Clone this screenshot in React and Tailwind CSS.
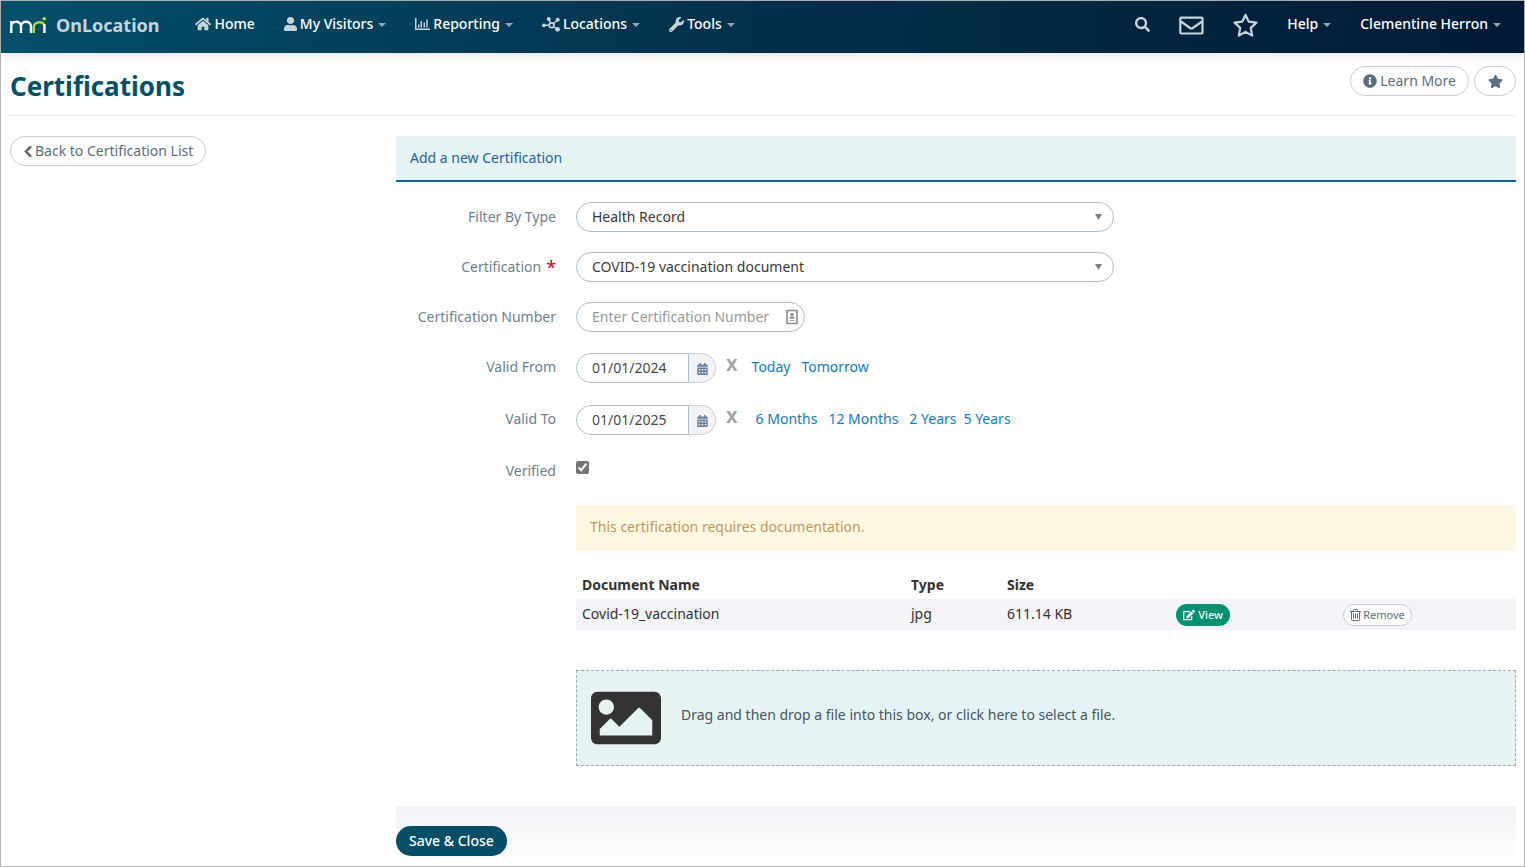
import React from "react";
import {
  FaHome,
  FaUser,
  FaWrench,
  FaSearch,
  FaStar,
  FaInfoCircle,
  FaChevronLeft,
  FaCalendarAlt,
  FaEdit,
  FaImage,
} from "react-icons/fa";

function Logo() {
  return (
    <svg viewBox="0 0 36 17" className="h-[17px] w-9" fill="none" strokeWidth="2.4">
      <path d="M1.3 16V4M1.3 9.500C1.300 3.200 11 3.200 11 9.500V16M11 9.500C11 3.200 21 3.200 21 9.500V16" stroke="#fff" />
      <path d="M23.800 16V10C23.800 5.500 32 3 34.200 8" stroke="#b5d334" />
      <path d="M34.400 7V16" stroke="#fff" />
      <circle cx="34.200" cy="1.800" r="1.800" fill="#c3dc2f" />
    </svg>
  );
}

function BarChartIcon() {
  return (
    <svg viewBox="0 0 15 12" className="h-3 w-[15px]" fill="currentColor">
      <path d="M0 0H1.500V10.500H15V12H0ZM3 6.500H4.500V9.500H3ZM5.500 3H7V9.500H5.500ZM8.500 4.500H10V9.500H8.500ZM11.200 1.500H12.700V9.500H11.200Z" />
    </svg>
  );
}

function NetworkIcon() {
  return (
    <svg viewBox="0 0 18 15" className="h-[15px] w-[18px]" fill="currentColor">
      <path
        d="M1.800 8.300H7M6.700 2L8.500 6M15.700 2.800L11.500 6.500M15.700 12.200L11.500 9.800"
        stroke="currentColor"
        strokeWidth="1.400"
      />
      <circle cx="1.900" cy="8.300" r="1.900" />
      <circle cx="6.700" cy="2.100" r="2" />
      <circle cx="15.700" cy="2.800" r="2" />
      <circle cx="15.600" cy="12.300" r="2.400" />
      <circle cx="9.600" cy="8.300" r="2.400" fill="none" stroke="currentColor" strokeWidth="1.700" />
    </svg>
  );
}

function EnvelopeIcon() {
  return (
    <svg viewBox="0 0 25 19" className="h-[19px] w-[25px]" fill="none" stroke="currentColor" strokeWidth="2.200">
      <rect x="1.300" y="1.600" width="22.200" height="15.900" rx="1" />
      <path d="M2 5.500L11 12Q12.400 13 13.800 12L23 5.500" />
    </svg>
  );
}

function StarIcon() {
  return (
    <svg viewBox="0 0 25 25" className="size-[25px]" fill="none" stroke="currentColor" strokeWidth="2.200" strokeLinejoin="round">
      <path d="M12.500 1.800L15.700 8.600L23.400 9.600L17.800 14.900L19.200 22.600L12.500 18.900L5.800 22.600L7.200 14.900L1.600 9.600L9.300 8.600Z" />
    </svg>
  );
}

function TrashIcon() {
  return (
    <svg viewBox="0 0 11 12" className="h-3 w-[11px]" fill="none" stroke="currentColor">
      <path d="M0 2.500H11M3.500 2.500V1.500Q3.500.5 4.500.5H6.500Q7.500.5 7.500 1.500V2.500M1.500 2.500V10.500Q1.500 11.500 2.500 11.500H8.500Q9.500 11.500 9.500 10.500V2.500M3.500 4.500V9.500M5.500 4.500V9.500M7.500 4.500V9.500" />
    </svg>
  );
}

function ContactCardIcon() {
  return (
    <svg viewBox="0 0 12 16" className="h-4 w-3" fill="none">
      <rect x="1" y="1.500" width="10" height="13" rx="0.5" stroke="#8a8a8a" strokeWidth="1.600" />
      <circle cx="6" cy="5.500" r="1.500" fill="#777" />
      <path d="M3.500 9.500Q3.500 7.500 6 7.500T8.500 9.500Z" fill="#777" />
      <path d="M3.500 11.500H8.500" stroke="#aaa" />
    </svg>
  );
}

function Caret() {
  return (
    <svg viewBox="0 0 8 4" className="mt-0.5 ml-[5px] h-1 w-2" fill="#8fa6b5">
      <path d="M0 0H8L4 4Z" />
    </svg>
  );
}

function NavItem({ icon, label, caret }) {
  return (
    <a href="#" className="flex items-center pb-0.5 font-medium text-white">
      {icon && <span className="mr-[3px] flex text-[#c6d4dc]">{icon}</span>}
      {label}
      {caret && <Caret />}
    </a>
  );
}

function Row({ label, htmlFor, required, children, className = "" }) {
  return (
    <div className={"flex " + className}>
      <label htmlFor={htmlFor} className="w-40 shrink-0 text-right leading-[30px] text-[#6d7f95]">
        {label}
        {required && <span className="ml-[5px] align-[-2px] text-lg leading-none font-medium text-[#d0103a]">*</span>}
      </label>
      <div className="ml-5 min-w-0 flex-1">{children}</div>
    </div>
  );
}

function Select({ id, value }) {
  return (
    <div className="relative w-[57.25%]">
      <select
        id={id}
        className="h-[30px] w-full appearance-none rounded-full border border-[#adbdd2] bg-white px-[15px] text-[#3a3a3a]"
      >
        <option>{value}</option>
      </select>
      <svg viewBox="0 0 7 6" className="pointer-events-none absolute top-3 right-3 h-1.5 w-[7px]" fill="#7f7f7f">
        <path d="M0 0H7L3.500 6Z" />
      </svg>
    </div>
  );
}

function DateField({ id, value, children }) {
  return (
    <div className="flex h-8">
      <div className="flex items-center">
        <input
          id={id}
          defaultValue={value}
          className="h-[30px] w-[113px] rounded-l-full border border-[#adbdd2] pb-0.5 pl-[15px] text-[#4a4a4a]"
        />
        <button
          type="button"
          aria-label="Open calendar"
          className="flex h-[30px] w-[27px] items-center justify-center rounded-r-full border border-l-0 border-[#c3d0d6] bg-[#f3f3f8] text-[#6b7f96]"
        >
          <FaCalendarAlt className="mt-0.5 h-3 w-[11px]" />
        </button>
      </div>
      <button
        type="button"
        aria-label="Clear"
        className="mx-2.5 h-[30px] font-['DejaVu_Sans',sans-serif] text-[15px] font-bold text-[#a3a3a3]"
      >
        X
      </button>
      <div className="flex gap-[11px] pl-1 leading-[30px] text-[#0e7ec4]">{children}</div>
    </div>
  );
}

export default function App() {
  return (
    <div className="flex min-h-screen flex-col border border-[#b5b5b5] bg-white font-['Noto_Sans',sans-serif] text-sm text-[#333]">
      <header className="flex h-[52px] items-center justify-between bg-linear-[100deg] from-[#04506a] via-[#02304b] to-[#011a35] pr-[23px] pb-1 pl-[9px] shadow-[0_2px_10px_rgba(0,0,0,0.12)]">
        <div className="flex items-center">
          <Logo />
          <span className="ml-2.5 text-lg font-bold text-[#c4d4dc]">OnLocation</span>
          <nav className="ml-9 flex items-center gap-[29px]">
            <NavItem icon={<FaHome className="size-4" />} label="Home" />
            <NavItem icon={<FaUser className="h-3.5 w-[13px]" preserveAspectRatio="none" />} label="My Visitors" caret />
            <NavItem icon={<BarChartIcon />} label="Reporting" caret />
            <NavItem icon={<NetworkIcon />} label="Locations" caret />
            <NavItem icon={<FaWrench className="size-[15px]" />} label="Tools" caret />
          </nav>
        </div>
        <div className="flex items-center gap-[29px] text-[#c6d4dc]">
          <button aria-label="Search" className="pb-0.5">
            <FaSearch className="size-[15px]" />
          </button>
          <button aria-label="Messages">
            <EnvelopeIcon />
          </button>
          <button aria-label="Favorites">
            <StarIcon />
          </button>
          <NavItem label="Help" caret />
          <NavItem label="Clementine Herron" caret />
        </div>
      </header>

      <main className="flex flex-1 flex-col pr-2 pl-[9px]">
        <div className="flex h-[63px] items-start justify-between border-b border-[#eee] pt-[13px]">
          <h1 className="mt-1 text-[26px] leading-8 font-bold text-[#00506a]">Certifications</h1>
          <div className="flex gap-[5px] text-[#5b6f82]">
            <button className="flex h-[30px] items-center gap-[3px] rounded-full border border-[#c3d0d6] px-3">
              <FaInfoCircle className="size-3.5" />
              Learn More
            </button>
            <button
              aria-label="Add to favorites"
              className="flex h-[30px] w-[42px] items-center justify-center rounded-full border border-[#c3d0d6]"
            >
              <FaStar className="size-[15px]" />
            </button>
          </div>
        </div>

        <div className="mt-5 flex flex-1 items-stretch">
          <aside className="w-[386px] shrink-0">
            <button className="flex h-[30px] items-center gap-0.5 rounded-full border border-[#c3d0d6] px-3 text-[#5b6f82]">
              <FaChevronLeft className="h-[13px] w-2.5" strokeWidth="30" />
              Back to Certification List
            </button>
          </aside>

          <form className="flex min-w-0 flex-1 flex-col">
            <h2 className="h-[46px] border-b-2 border-[#0b6499] bg-[#e5f3f5] px-3.5 leading-[44px] text-[#1f649b]">
              Add a new Certification
            </h2>
            <div className="mt-5 flex flex-col gap-5">
              <Row label="Filter By Type" htmlFor="type">
                <Select id="type" value="Health Record" />
              </Row>
              <Row label="Certification" htmlFor="certification" required className="h-[30px]">
                <Select id="certification" value="COVID-19 vaccination document" />
              </Row>
              <Row label="Certification Number" htmlFor="number">
                <div className="relative w-[229px]">
                  <input
                    id="number"
                    placeholder="Enter Certification Number"
                    className="h-[30px] w-full rounded-full border border-[#adbdd2] pr-8 pb-0.5 pl-[15px] placeholder:text-[#999]"
                  />
                  <span className="absolute top-[7px] right-[7px]">
                    <ContactCardIcon />
                  </span>
                </div>
              </Row>
              <Row label="Valid From" htmlFor="from">
                <DateField id="from" value="01/01/2024">
                  <a href="#">Today</a>
                  <a href="#">Tomorrow</a>
                </DateField>
              </Row>
              <Row label="Valid To" htmlFor="to">
                <DateField id="to" value="01/01/2025">
                  <a href="#" className="pl-1">
                    6 Months
                  </a>
                  <a href="#">12 Months</a>
                  <span className="flex gap-[7px]">
                    <a href="#">2 Years</a>
                    <a href="#">5 Years</a>
                  </span>
                </DateField>
              </Row>
              <Row label="Verified" htmlFor="verified" className="h-[29px]">
                <input id="verified" type="checkbox" defaultChecked className="mt-[5px] block size-[13px] accent-[#757575]" />
              </Row>
            </div>

            <div className="mt-5 ml-45">
              <p className="h-[46px] bg-[#fdf6e1] px-3.5 leading-[44px] text-[#be9a5c]">
                This certification requires documentation.
              </p>
              <table className="mt-5 w-full table-fixed text-left">
                <thead>
                  <tr className="h-7">
                    <th className="w-[35%] px-1.5 font-bold">Document Name</th>
                    <th className="w-24 px-1.5 font-bold">Type</th>
                    <th className="w-[18%] px-1.5 font-bold">Size</th>
                    <th className="w-[167px]"></th>
                    <th></th>
                  </tr>
                </thead>
                <tbody>
                  <tr className="h-[31px] bg-[#f3f3f8]">
                    <td className="px-1.5 pb-0.5">Covid-19_vaccination</td>
                    <td className="px-1.5 pb-0.5">jpg</td>
                    <td className="px-1.5 pb-0.5">611.14 KB</td>
                    <td className="px-1.5">
                      <button type="button" className="flex h-[22px] items-center gap-[3px] rounded-full bg-[#009270] px-[7px] text-[11px] font-medium text-white">
                        <FaEdit className="size-3" />
                        View
                      </button>
                    </td>
                    <td className="px-1.5">
                      <button type="button" className="flex h-[22px] items-center gap-0.5 rounded-full border border-[#c3d0d6] bg-white px-1.5 text-[11px] text-[#5b6f82]">
                        <TrashIcon />
                        Remove
                      </button>
                    </td>
                  </tr>
                </tbody>
              </table>

              <button
                type="button"
                className="mt-10 flex h-24 w-full items-center gap-5 border border-dashed border-[#9aaeae] bg-[#e5f3f5] px-3.5 text-[#4a5560]"
              >
                <FaImage className="size-[70px] text-[#333]" />
                <span className="pb-1.5">Drag and then drop a file into this box, or click here to select a file.</span>
              </button>
            </div>

            <footer className="mt-10 flex-1 bg-linear-to-b from-[#f3f3f8] to-white pt-5">
              <button type="button" className="h-[30px] rounded-full bg-[#034f68] px-[13px] font-medium text-white">
                Save &amp; Close
              </button>
            </footer>
          </form>
        </div>
      </main>
    </div>
  );
}
